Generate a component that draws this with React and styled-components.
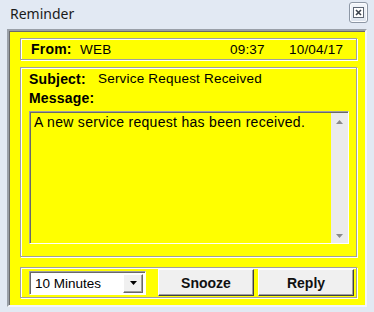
import styled, { createGlobalStyle } from "styled-components";

const Global = createGlobalStyle`
  html, body {
    margin: 0;
    padding: 0;
    background: #e2e9f3;
  }
  * { box-sizing: border-box; }
`;

const Window = styled.div`
  width: 374px;
  height: 312px;
  background: #e2e9f3;
  font-family: "Liberation Sans", Arial, sans-serif;
  font-size: 13.5px;
  letter-spacing: 0.2px;
  color: #000;
  overflow: hidden;
`;

const TitleBar = styled.div`
  height: 29px;
  display: flex;
  align-items: center;
  justify-content: space-between;
  padding: 0 6px 0 10px;
`;

const Title = styled.span`
  font-family: "Noto Sans", "Open Sans", sans-serif;
  font-size: 14px;
  letter-spacing: 0;
  color: #1a1a1a;
  margin-top: -3px;
`;

const CloseButton = styled.div`
  width: 19px;
  height: 21px;
  margin-top: -4px;
  border: 1px solid #8d97a5;
  border-radius: 3px;
  background: linear-gradient(#f3f6fa, #dde4ee);
  box-shadow: inset 0 0 0 1px #fbfcfe;
  display: flex;
  align-items: center;
  justify-content: center;
`;

const Frame = styled.div`
  margin-left: 7px;
  width: 360px;
  height: 278px;
  background: #ffff00;
  border: 2px solid;
  border-color: #9aa0a8 #f4f6f9 #f4f6f9 #9aa0a8;
  box-shadow: inset 1px 1px 0 #6a6a6a;
  padding: 7px 8px 7px 11px;
  display: flex;
  flex-direction: column;
`;

const Panel = styled.div`
  height: ${(p) => p.h}px;
  margin-top: ${(p) => p.gap || 0}px;
  border: 1px solid #a0a0a0;
  box-shadow: inset 1px 1px 0 #fff, 1px 1px 0 #fff;
  display: flex;
  flex-direction: ${(p) => (p.column ? "column" : "row")};
  align-items: ${(p) => (p.column ? "stretch" : "center")};
  padding: ${(p) => p.pad || "0"};
`;

const Label = styled.span`
  font-weight: bold;
  font-size: 14px;
  width: ${(p) => p.w}px;
  flex: none;
`;

const Value = styled.span`
  width: ${(p) => (p.w ? p.w + "px" : "auto")};
  flex: ${(p) => (p.w ? "none" : "1")};
`;

const Line = styled.div`
  height: ${(p) => p.h || 20}px;
  display: flex;
  align-items: center;
`;

const TextArea = styled.div`
  margin-top: ${(p) => p.top}px;
  height: 133px;
  display: flex;
  border: 1px solid;
  border-color: #a0a0a0 #ffffff #ffffff #a0a0a0;
  box-shadow: inset 1px 1px 0 #696969;
`;

const TextBody = styled.div`
  flex: 1;
  padding: 2px 4px;
  line-height: 16px;
  font-size: 14px;
  letter-spacing: 0.3px;
`;

const ScrollBar = styled.div`
  width: 17px;
  margin: 1px 0 0 0;
  background: #ebebeb;
  display: flex;
  flex-direction: column;
  justify-content: space-between;
  align-items: center;
  padding: 7px 0 4px;
`;

const Select = styled.div`
  width: 117px;
  height: 24px;
  display: flex;
  background: #fff;
  border: 1px solid;
  border-color: #a0a0a0 #ffffff #ffffff #a0a0a0;
  box-shadow: inset 1px 1px 0 #696969;
  padding: 2px 2px 1px 2px;
`;

const SelectText = styled.span`
  flex: 1;
  padding-left: 3px;
  display: flex;
  align-items: center;
  letter-spacing: 0;
`;

const ArrowButton = styled.div`
  width: 20px;
  background: #f0f0f0;
  border: 1px solid;
  border-color: #fff #696969 #696969 #fff;
  box-shadow: inset -1px -1px 0 #a0a0a0;
  display: flex;
  align-items: center;
  justify-content: center;
`;

const Button = styled.div`
  width: 96px;
  height: 27px;
  margin-left: ${(p) => p.ml}px;
  background: #f0f0f0;
  border: 1px solid;
  border-color: #ffffff #404040 #404040 #ffffff;
  box-shadow: inset -1px -1px 0 #a0a0a0;
  font-weight: bold;
  font-size: 14px;
  letter-spacing: 0;
  display: flex;
  align-items: center;
  justify-content: center;
  color: #111;
`;

const Triangle = ({ up, color = "#000", w = 7 }) => (
  <svg width={w} height={Math.ceil(w / 2) + 1} viewBox={`0 0 ${w} ${Math.ceil(w / 2) + 1}`}>
    <polygon
      points={up ? `0,${Math.ceil(w / 2)} ${w},${Math.ceil(w / 2)} ${w / 2},0` : `0,0 ${w},0 ${w / 2},${Math.ceil(w / 2)}`}
      fill={color}
    />
  </svg>
);

export default function App() {
  return (
    <Window>
      <Global />
      <TitleBar>
        <Title>Reminder</Title>
        <CloseButton>
          <svg width="11" height="11" viewBox="0 0 11 11">
            <rect x="0.5" y="0.5" width="10" height="10" fill="#fff" stroke="#5d6673" />
            <path d="M3 3 L8 8 M8 3 L3 8" stroke="#3b424c" strokeWidth="1.6" />
          </svg>
        </CloseButton>
      </TitleBar>
      <Frame>
        <Panel h={22} pad="0 0 0 10px">
          <Label w={49}>From:</Label>
          <Value w={150}>WEB</Value>
          <Value w={59}>09:37</Value>
          <Value>10/04/17</Value>
        </Panel>
        <Panel h={190} gap={7} column pad="2px 7px 0 8px">
          <Line h={17}>
            <Label w={69}>Subject:</Label>
            <Value>Service Request Received</Value>
          </Line>
          <Line h={21}>
            <Label w={80}>Message:</Label>
          </Line>
          <TextArea top={3}>
            <TextBody>A new service request has been received.</TextBody>
            <ScrollBar>
              <Triangle up color="#8a8a8a" />
              <Triangle color="#8a8a8a" />
            </ScrollBar>
          </TextArea>
        </Panel>
        <Panel h={31} gap={10} pad="0 2px 0 8px">
          <Select>
            <SelectText>10 Minutes</SelectText>
            <ArrowButton>
              <Triangle />
            </ArrowButton>
          </Select>
          <Button ml={12}>Snooze</Button>
          <Button ml={4}>Reply</Button>
        </Panel>
      </Frame>
    </Window>
  );
}
